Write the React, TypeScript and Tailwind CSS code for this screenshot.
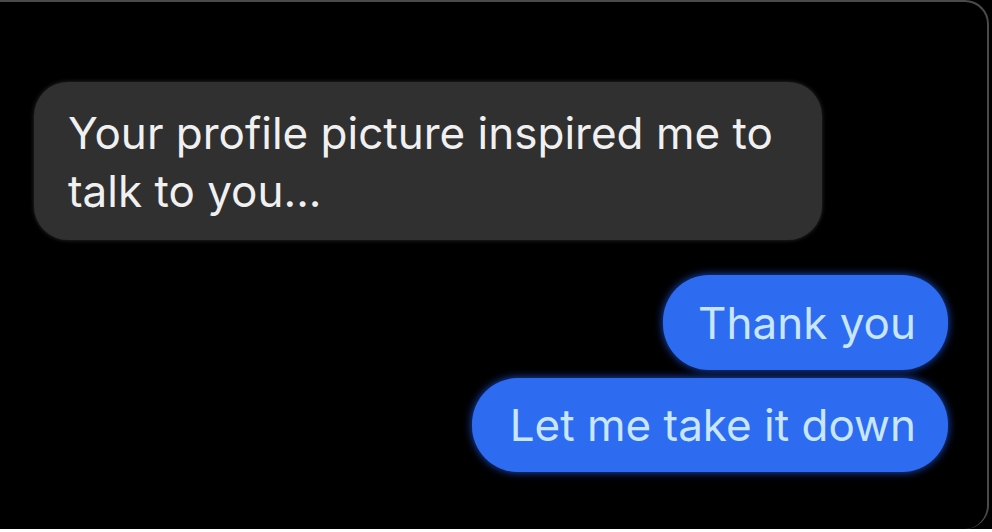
export default function App() {
  return (
    <div className="flex h-[532px] w-[992px] flex-col overflow-hidden bg-black font-['Inter','Liberation_Sans',sans-serif]">
      <div className="flex h-[529px] w-[989px] flex-col rounded-tr-[24px] rounded-br-[24px] border-t-2 border-r-2 border-[#4a4a4a] bg-black pt-[80px] pr-[39px] pl-[34px]">
        {/* incoming */}
        <div className="flex">
          <div className="w-[788px] rounded-[34px] bg-[#303030] px-[34px] pt-[22px] pb-[20px] text-[44px] leading-[58px] text-[#f0f0f0] shadow-[0_0_4px_#2f2f2f]">
            Your profile picture inspired me to
            <br />
            talk to you...
          </div>
        </div>

        {/* outgoing */}
        <div className="mt-[35px] flex flex-col items-end gap-[8px]">
          <div className="flex h-[95px] items-center rounded-[46px] bg-[#2d6cf0] pr-[32px] pl-[35px] text-[44px] text-[#c8e6ff] shadow-[0_0_8px_#1f4fd0]">
            Thank you
          </div>
          <div className="flex h-[94px] items-center rounded-[46px] bg-[#2d6cf0] pr-[32px] pl-[38px] text-[44px] text-[#c8e6ff] shadow-[0_0_8px_#1f4fd0]">
            Let me take it down
          </div>
        </div>
      </div>
      <div className="h-[3px] w-full bg-white" />
    </div>
  )
}
